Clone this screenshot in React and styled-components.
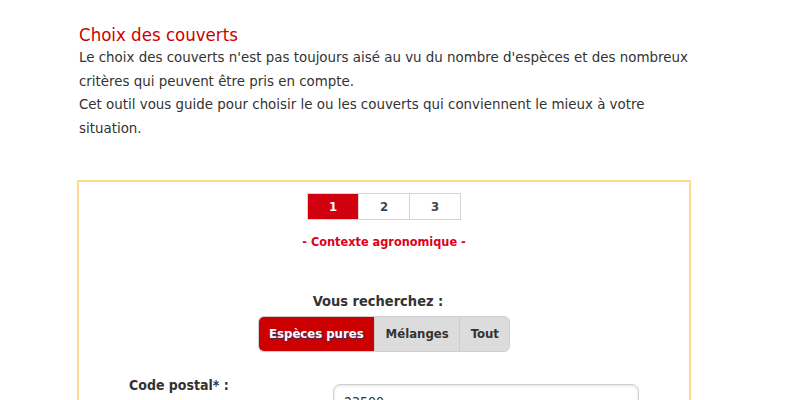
import { useState } from "react";
import styled, { createGlobalStyle } from "styled-components";

const GlobalStyle = createGlobalStyle`
  html, body {
    margin: 0;
    padding: 0;
    background: #fff;
  }
  body {
    font-family: "DejaVu Sans Condensed", "DejaVu Sans", Tahoma, sans-serif;
    color: #333;
  }
`;

const steps = [1, 2, 3];
const kinds = ["Espèces pures", "Mélanges", "Tout"];

const App = () => {
  const [step, setStep] = useState(1);
  const [kind, setKind] = useState(0);
  const [zip, setZip] = useState("23500");

  return (
    <>
      <GlobalStyle />
      <Page>
        <Title>Choix des couverts</Title>
        <Intro>
          Le choix des couverts n'est pas toujours aisé au vu du nombre d'espèces et des nombreux
          critères qui peuvent être pris en compte.
          <br />
          Cet outil vous guide pour choisir le ou les couverts qui conviennent le mieux à votre
          situation.
        </Intro>

        <Wizard>
          <Steps>
            {steps.map((n) => (
              <Step key={n} $active={n === step} onClick={() => setStep(n)}>
                {n}
              </Step>
            ))}
          </Steps>
          <StepLabel>- Contexte agronomique -</StepLabel>

          <Question>Vous recherchez :</Question>
          <Segmented>
            {kinds.map((k, i) => (
              <Segment key={k} $active={i === kind} onClick={() => setKind(i)}>
                {k}
              </Segment>
            ))}
          </Segmented>

          <FormRow>
            <Label htmlFor="cp">Code postal* :</Label>
            <Input id="cp" value={zip} onChange={(e) => setZip(e.target.value)} />
          </FormRow>
        </Wizard>
      </Page>
    </>
  );
};

export default App;

const Page = styled.div`
  width: 614px;
  margin-left: 77px;
  padding-top: 24px;
`;

const Title = styled.h1`
  margin: 0 0 0 2px;
  font-size: 18.5px;
  line-height: 22px;
  font-weight: normal;
  color: #cc0000;
`;

const Intro = styled.p`
  margin: 0 -12px 39px 2px;
  font-size: 14.9px;
  line-height: 23.7px;
`;

const Wizard = styled.div`
  border: 2px solid #fdd98b;
  padding: 11px 0 40px;
  display: flex;
  flex-direction: column;
  align-items: center;
`;

const Steps = styled.div`
  display: flex;
  border: 1px solid #d4d4d4;
`;

const Step = styled.div`
  width: 50px;
  height: 25px;
  display: flex;
  align-items: center;
  justify-content: center;
  font-size: 13px;
  font-weight: bold;
  cursor: pointer;
  color: ${(p) => (p.$active ? "#fff" : "#3c4650")};
  background: ${(p) => (p.$active ? "#d0000f" : "#fff")};
  & + & {
    border-left: 1px solid #d4d4d4;
  }
`;

const StepLabel = styled.div`
  margin-top: 14px;
  font-size: 12.6px;
  line-height: 16px;
  font-weight: bold;
  color: #e0001b;
`;

const Question = styled.div`
  margin-top: 42px;
  margin-right: 12px;
  font-size: 14.5px;
  line-height: 18px;
  font-weight: bold;
  color: #333;
`;

const Segmented = styled.div`
  margin-top: 6px;
  display: flex;
  border: 1px solid #cfcfcf;
  border-radius: 6px;
  overflow: hidden;
  background: #dcdcdc;
`;

const Segment = styled.div`
  height: 34px;
  padding: 0 10.5px;
  display: flex;
  align-items: center;
  font-size: 13px;
  font-weight: bold;
  cursor: pointer;
  color: ${(p) => (p.$active ? "#fff" : "#333")};
  background: ${(p) => (p.$active ? "#cc0000" : "#dcdcdc")};
  text-shadow: ${(p) => (p.$active ? "1px 1px 1px #2b2b6b" : "none")};
  & + & {
    border-left: 1px solid #cbcbcb;
  }
`;

const FormRow = styled.div`
  align-self: stretch;
  margin-top: 23px;
  padding-left: 50px;
  display: grid;
  grid-template-columns: 204px 306px;
  align-items: start;
`;

const Label = styled.label`
  font-size: 14px;
  line-height: 20px;
  font-weight: bold;
  color: #333;
`;

const Input = styled.input`
  box-sizing: border-box;
  width: 306px;
  height: 36px;
  margin-top: 9px;
  padding: 4px 10px;
  border: 1px solid #cfcfcf;
  border-radius: 7px;
  box-shadow: inset 0 1px 3px rgba(0, 0, 0, 0.12);
  font-family: "DejaVu Sans Condensed", "DejaVu Sans", sans-serif;
  font-size: 14px;
  color: #333;
  outline: none;
`;
